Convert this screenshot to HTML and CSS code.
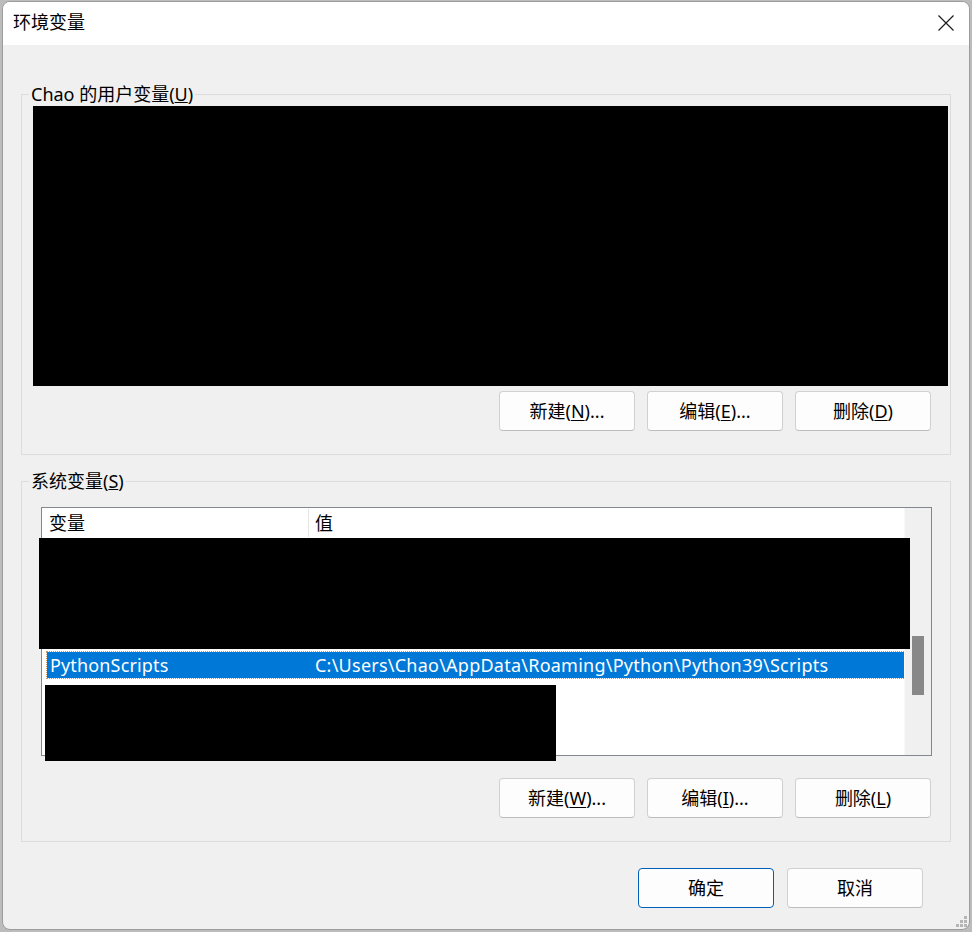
FILE: index.html
```html
<!DOCTYPE html>
<html lang="zh-CN">
<head>
<meta charset="utf-8">
<title>环境变量</title>
<link rel="stylesheet" href="styles.css">
</head>
<body>
<div class="window">
  <div class="titlebar">
    <span class="title">环境变量</span>
    <span class="close">
      <svg width="16" height="16" viewBox="0 0 16 16"><path d="M0.5 0.5 L15.5 15.5 M15.5 0.5 L0.5 15.5" stroke="#1b1b1b" stroke-width="1.2" fill="none"/></svg>
    </span>
  </div>
  <div class="content">
    <fieldset class="group group-user">
      <legend>Chao 的用户变量(<u>U</u>)</legend>
      <div class="redact redact-user"></div>
      <div class="btnrow">
        <button class="btn">新建(<u>N</u>)...</button>
        <button class="btn">编辑(<u>E</u>)...</button>
        <button class="btn">删除(<u>D</u>)</button>
      </div>
    </fieldset>

    <fieldset class="group group-sys">
      <legend>系统变量(<u>S</u>)</legend>
      <div class="listbox">
        <div class="list-main">
          <div class="list-header">
            <div class="col-name">变量</div>
            <div class="col-value">值</div>
          </div>
          <div class="rows">
            <div class="row"></div>
            <div class="row"></div>
            <div class="row"></div>
            <div class="row"></div>
            <div class="row selected">
              <div class="cell-name">PythonScripts</div>
              <div class="cell-value">C:\Users\Chao\AppData\Roaming\Python\Python39\Scripts</div>
            </div>
          </div>
        </div>
        <div class="scrollbar"><div class="thumb"></div></div>
        <div class="redact redact-sys-a"></div>
        <div class="redact redact-sys-b"></div>
      </div>
      <div class="btnrow btnrow-sys">
        <button class="btn">新建(<u>W</u>)...</button>
        <button class="btn">编辑(<u>I</u>)...</button>
        <button class="btn">删除(<u>L</u>)</button>
      </div>
    </fieldset>

    <div class="footer">
      <button class="btn btn-default">确定</button>
      <button class="btn">取消</button>
    </div>

    <svg class="grip" width="14" height="14" viewBox="0 0 14 14">
      <rect x="9" y="1" width="3" height="3" fill="#b5b5b5"/>
      <rect x="5" y="5" width="3" height="3" fill="#b5b5b5"/>
      <rect x="9" y="5" width="3" height="3" fill="#b5b5b5"/>
      <rect x="1" y="9" width="3" height="3" fill="#b5b5b5"/>
      <rect x="5" y="9" width="3" height="3" fill="#b5b5b5"/>
      <rect x="9" y="9" width="3" height="3" fill="#b5b5b5"/>
    </svg>
  </div>
</div>
</body>
</html>
```

FILE: styles.css
```css
html, body {
  margin: 0;
  padding: 0;
}
body {
  background: #bcbcbc;
  width: 972px;
  height: 932px;
  overflow: hidden;
  font-family: "Noto Sans", "Noto Sans CJK SC", sans-serif;
  font-size: 18px;
  color: #000;
}
.window {
  margin: 1px 0 0 2px;
  width: 966px;
  height: 927px;
  border: 1px solid #9c9c9c;
  border-radius: 8px;
  overflow: hidden;
  background: #f0f0f0;
  display: flex;
  flex-direction: column;
}
.titlebar {
  height: 43px;
  flex: none;
  background: #fff;
  display: flex;
  align-items: center;
  justify-content: space-between;
  padding: 0 15px 0 10px;
}
.title {
  line-height: 22px;
  margin-top: -3px;
}
.close {
  display: flex;
  margin-top: -2px;
}
.content {
  flex: 1;
  position: relative;
  display: flex;
  flex-direction: column;
}
.group {
  margin: 0 18px;
  padding: 0 19px 23px 0;
  border: 1px solid #dcdcdc;
  min-width: 0;
  display: flex;
  flex-direction: column;
}
.group legend {
  margin-left: 7px;
  padding: 0 2px;
  line-height: 22px;
  height: 22px;
}
.group-user {
  margin-top: 38px;
}
.group-sys {
  margin-top: 15px;
}
.redact {
  background: #000;
}
.redact-user {
  margin: 1px -17px 0 11px;
  height: 280px;
}
.btnrow {
  display: flex;
  justify-content: flex-end;
  gap: 12px;
  margin-top: 5px;
}
.btnrow-sys {
  margin-top: 22px;
}
.btn {
  width: 136px;
  height: 40px;
  background: #fdfdfd;
  border: 1px solid #d0d0d0;
  border-bottom-color: #bdbdbd;
  border-radius: 4px;
  font-family: "Noto Sans", "Noto Sans CJK SC", sans-serif;
  font-size: 18px;
  color: #000;
  padding: 0;
  line-height: 22px;
}
.btn u {
  text-underline-offset: 2px;
}
.btn-default {
  border: 1px solid #005fb8;
}
.listbox {
  position: relative;
  margin: 15px 0 0 19px;
  width: 889px;
  height: 247px;
  border: 1px solid #828790;
  background: #fff;
  display: flex;
}
.list-main {
  flex: 1;
  display: flex;
  flex-direction: column;
}
.list-header {
  height: 30px;
  display: flex;
  align-items: center;
}
.col-name {
  width: 259px;
  padding-left: 7px;
  height: 28px;
  line-height: 28px;
  border-right: 1px solid #e5e5e5;
}
.col-value {
  padding-left: 6px;
  line-height: 28px;
}
.rows {
  padding-top: 1px;
  display: flex;
  flex-direction: column;
}
.row {
  height: 28px;
  margin-left: 5px;
  display: flex;
  align-items: center;
}
.row.selected {
  background: #0078d7;
  color: #fff;
  height: 26px;
  margin-top: 1px;
  margin-bottom: 1px;
  outline: 1px dotted #d39a63;
  margin-right: -1px;
}
.cell-name {
  width: 258px;
  padding-left: 3px;
  white-space: nowrap;
  letter-spacing: 0.15px;
}
.cell-value {
  padding-left: 7px;
  white-space: nowrap;
  letter-spacing: 0.24px;
}
.scrollbar {
  width: 26px;
  flex: none;
  background: #f0f0f0;
  border-left: 1px solid #f8f8f8;
}
.thumb {
  width: 12px;
  height: 59px;
  margin: 128px 0 0 7px;
  background: #888;
}
.redact-sys-a {
  position: absolute;
  left: -3px;
  top: 30px;
  width: 871px;
  height: 111px;
}
.redact-sys-b {
  position: absolute;
  left: 3px;
  top: 177px;
  width: 511px;
  height: 76px;
}
.footer {
  display: flex;
  justify-content: flex-end;
  gap: 13px;
  margin: 26px 46px 0 0;
}
.grip {
  position: absolute;
  right: 0;
  bottom: 0;
}
```
